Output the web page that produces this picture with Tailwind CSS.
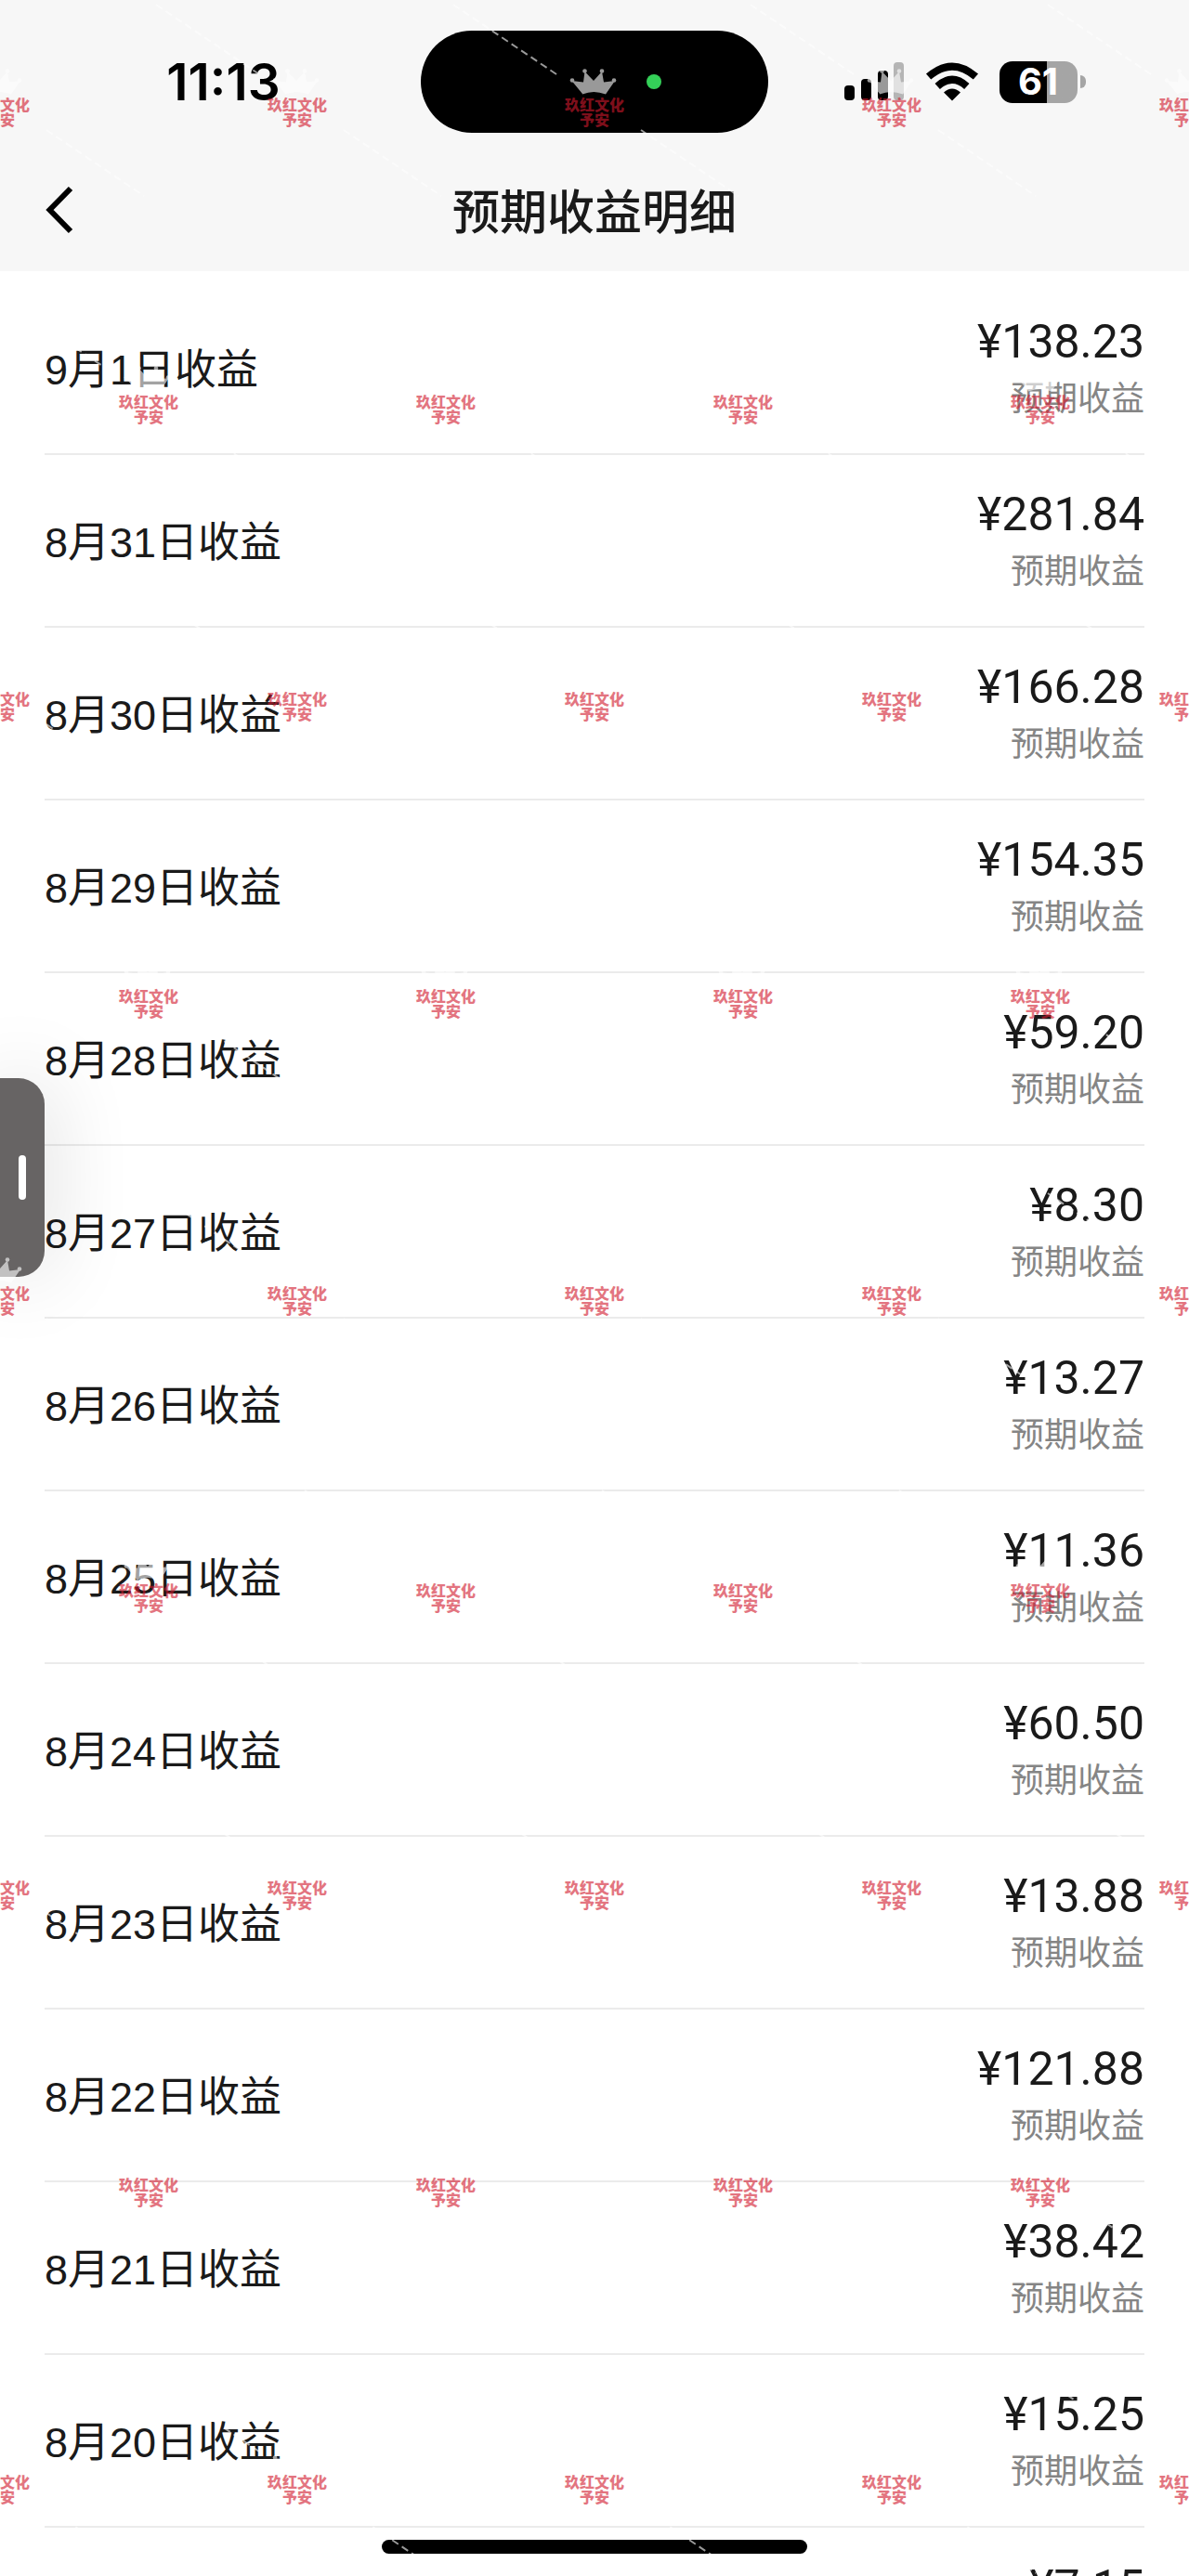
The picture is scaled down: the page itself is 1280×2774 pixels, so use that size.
<!DOCTYPE html>
<html lang="zh-CN">
  <head>
    <meta charset="UTF-8" />
    <meta name="viewport" content="width=device-width, initial-scale=1.0" />
    <title>预期收益明细</title>
    <script src="https://cdn.jsdelivr.net/npm/@tailwindcss/browser@4"></script>
  </head>
  <body class="bg-white">
    <div
      class="relative h-screen overflow-hidden bg-white text-[#1a1a1a] font-['Liberation_Sans','Noto_Sans_CJK_SC',sans-serif]"
    >
      <header class="bg-[#f7f7f7]">
        <!-- Status bar -->
        <div class="grid grid-cols-[1fr_374px_1fr] items-center pt-[33px]">
          <div
            class="pl-7 text-center text-[55px] leading-none font-semibold text-black font-['Inter',sans-serif]"
          >
            11:13
          </div>
          <div class="h-[110px] rounded-full bg-black flex items-center justify-end pr-[115px]">
            <span class="size-4 rounded-full bg-[#34d058]"></span>
          </div>
          <div class="flex items-center justify-center gap-[22px] pr-[30px]">
            <svg class="w-[65px] h-[42px]" viewBox="0 0 65 42">
              <rect x="0" y="25" width="11" height="16" rx="4" />
              <rect x="18" y="18" width="11" height="23" rx="4" />
              <rect x="36" y="9" width="11" height="32" rx="4" />
              <rect x="53" y="0" width="11" height="41" rx="4" fill="#b5b5b5" />
            </svg>
            <svg class="w-[58px] h-[42px]" viewBox="0 0 58 42">
              <path d="M29 41.5 20 32.6Q29 24.6 38 32.6Z" />
              <path
                d="M13.2 26Q29 11.6 44.8 26M3.6 15.6Q29-6.4 54.4 15.6"
                fill="none"
                stroke="#000"
                stroke-width="8"
              />
            </svg>
            <div class="flex items-center gap-[3px]">
              <div
                class="w-[84px] h-[45px] rounded-[14px] bg-linear-to-r from-black from-61% to-[#a5a5a5] to-61% flex items-center justify-center text-[40px] leading-none font-bold text-white font-['Inter',sans-serif]"
              >
                61
              </div>
              <div class="w-[6px] h-[14px] rounded-r-full bg-[#a5a5a5]"></div>
            </div>
          </div>
        </div>

        <!-- Nav bar -->
        <div class="grid grid-cols-[1fr_auto_1fr] items-center h-[149px] pt-4 px-12">
          <button type="button" aria-label="返回" class="justify-self-start">
            <svg class="w-8 h-[52px]" viewBox="0 0 32 52">
              <path d="M28 3 5.500 26 28 49" fill="none" stroke="#000" stroke-width="6" />
            </svg>
          </button>
          <h1 class="text-[51px] leading-none font-medium font-['Noto_Sans_CJK_SC',sans-serif]">
            预期收益明细
          </h1>
        </div>
      </header>

      <ul id="list" class="px-12 pt-3"></ul>

      <!-- Side drawer handle -->
      <div
        class="absolute left-0 top-[1161px] w-12 h-[214px] rounded-r-[28px] bg-[#676464] shadow-[0_0_90px_rgba(0,0,0,0.16)] flex items-center justify-end pr-5"
      >
        <span class="w-2 h-12 rounded-full bg-white"></span>
      </div>

      <!-- Home indicator -->
      <div
        class="absolute bottom-6 left-1/2 -translate-x-1/2 w-[458px] h-[15px] rounded-full bg-black"
      ></div>

      <!-- Watermark -->
      <div
        id="watermark"
        aria-hidden="true"
        class="absolute inset-0 overflow-hidden pointer-events-none opacity-60"
      ></div>
    </div>

    <script>
      const items = [
        ["9月1日", "138.23"],
        ["8月31日", "281.84"],
        ["8月30日", "166.28"],
        ["8月29日", "154.35"],
        ["8月28日", "59.20"],
        ["8月27日", "8.30"],
        ["8月26日", "13.27"],
        ["8月25日", "11.36"],
        ["8月24日", "60.50"],
        ["8月23日", "13.88"],
        ["8月22日", "121.88"],
        ["8月21日", "38.42"],
        ["8月20日", "15.25"],
        ["8月19日", "7.15"],
      ];

      document.getElementById("list").innerHTML = items
        .map(
          ([day, amount]) => `
          <li class="flex items-center justify-between h-[186px] border-b-2 border-[#ebebeb]">
            <span class="pt-1 text-[45px] leading-none">${day}收益</span>
            <div class="pb-2 text-right">
              <p class="text-[50px] leading-[68px] font-['Roboto',sans-serif]">¥${amount}</p>
              <p class="text-[36px] leading-[48px] text-[#858585] font-['Noto_Sans_CJK_SC',sans-serif]">预期收益</p>
            </div>
          </li>`
        )
        .join("");

      const mark = `
        <div class="relative shrink-0 w-80 h-80 pt-[104px] text-center text-[16px] leading-4 font-black text-[#d2192d] font-['Noto_Sans_CJK_SC',sans-serif]">
          <svg class="absolute inset-0 size-full" viewBox="0 0 320 320">
            <path d="M8 5 122 82M210 140 315 211" stroke="#fff" stroke-width="2" stroke-dasharray="8 4.600" />
            <g fill="#fff">
              <path d="M147 101 135.500 87 148 88.500 149.500 77 159 87 168 77 170 88.500 182 87 172 101.500Q159 96.500 147 101.500Z" />
              <circle cx="136" cy="86.500" r="2.300" />
              <circle cx="149.500" cy="76.500" r="2.300" />
              <circle cx="168" cy="76.500" r="2.300" />
              <circle cx="181" cy="86.500" r="2.300" />
            </g>
          </svg>
          <p>玖红文化</p>
          <p>予安</p>
        </div>`;

      // every other row is shifted by half a tile
      let rows = "";
      for (let i = 0; i < 9; i++) {
        rows += `<div class="flex ${i % 2 ? "" : "-ml-40"}">${mark.repeat(5)}</div>`;
      }
      document.getElementById("watermark").innerHTML = rows;
    </script>
  </body>
</html>
